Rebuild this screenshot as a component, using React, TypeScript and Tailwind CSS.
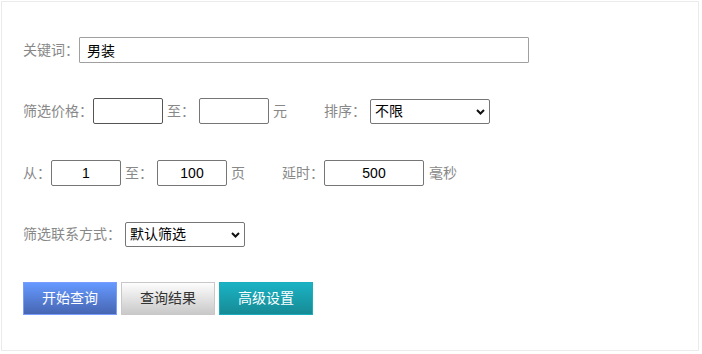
import React from "react";

const font = { fontFamily: '"Liberation Sans", "Noto Sans CJK SC", sans-serif' };

function Chevron() {
  return (
    <svg className="pointer-events-none absolute right-[5px] top-1/2 -translate-y-1/2" width="9" height="6" viewBox="0 0 9 6">
      <path d="M1 1 L4.5 4.5 L8 1" fill="none" stroke="#111" strokeWidth="2" />
    </svg>
  );
}

function Select({ w, value, options }: { w: string; value: string; options: string[] }) {
  return (
    <div className={`relative ${w} h-[25px]`}>
      <select
        defaultValue={value}
        className="h-full w-full appearance-none rounded-[2px] border border-[#767676] bg-white pl-[4px] text-[14px] leading-[23px] text-black outline-none"
      >
        {options.map((o) => (
          <option key={o}>{o}</option>
        ))}
      </select>
      <Chevron />
    </div>
  );
}

export default function App() {
  return (
    <div className="bg-white p-px" style={font}>
      <div className="flex h-[350px] w-[698px] flex-col border border-[#ebebeb] pl-[21px] text-[14px] text-[#888]">
        {/* row 1 */}
        <div className="mt-[35px] flex h-[26px] items-center">
          <span>关键词：</span>
          <input
            defaultValue="男装"
            className="h-[26px] w-[450px] rounded-[1px] border border-[#a0a0a0] bg-white px-[7px] text-[14px] text-black outline-none"
          />
        </div>
        {/* row 2 */}
        <div className="mt-[35px] flex h-[26px] items-center">
          <span>筛选价格：</span>
          <input className="h-[26px] w-[70px] rounded-[2px] border border-[#555] bg-white outline-none" />
          <span className="ml-[4px]">至：</span>
          <input className="ml-[4px] h-[26px] w-[70px] rounded-[2px] border border-[#767676] bg-white outline-none" />
          <span className="ml-[4px]">元</span>
          <span className="ml-[37px]">排序：</span>
          <div className="ml-[4px] mt-[1px]">
            <Select w="w-[120px]" value="不限" options={["不限", "价格从低到高", "价格从高到低"]} />
          </div>
        </div>
        {/* row 3 */}
        <div className="mt-[36px] flex h-[26px] items-center">
          <span>从：</span>
          <input
            defaultValue="1"
            className="h-[26px] w-[70px] rounded-[2px] border border-[#767676] bg-white text-center text-[14px] text-black outline-none"
          />
          <span className="ml-[4px]">至：</span>
          <input
            defaultValue="100"
            className="ml-[4px] h-[26px] w-[70px] rounded-[2px] border border-[#767676] bg-white text-center text-[14px] text-black outline-none"
          />
          <span className="ml-[4px]">页</span>
          <span className="ml-[37px]">延时：</span>
          <input
            defaultValue="500"
            className="h-[26px] w-[100px] rounded-[2px] border border-[#767676] bg-white text-center text-[14px] text-black outline-none"
          />
          <span className="ml-[5px]">毫秒</span>
        </div>
        {/* row 4 */}
        <div className="mt-[36px] flex h-[25px] items-center">
          <span>筛选联系方式：</span>
          <div className="ml-[4px]">
            <Select w="w-[120px]" value="默认筛选" options={["默认筛选", "有手机", "有电话"]} />
          </div>
        </div>
        {/* buttons */}
        <div className="mt-[35px] flex gap-[4px]">
          <button className="h-[33px] w-[94px] border border-[#7a9cff] bg-gradient-to-b from-[#6599ff] to-[#4766b2] text-[14px] text-white">
            开始查询
          </button>
          <button className="h-[33px] w-[94px] border border-[#c8c8c8] bg-gradient-to-b from-[#fdfdfd] to-[#c9c9c9] text-[14px] text-[#333]">
            查询结果
          </button>
          <button className="h-[33px] w-[94px] border border-[#19adbd] bg-gradient-to-b from-[#1bb3c5] to-[#168b95] text-[14px] text-white">
            高级设置
          </button>
        </div>
      </div>
    </div>
  );
}
